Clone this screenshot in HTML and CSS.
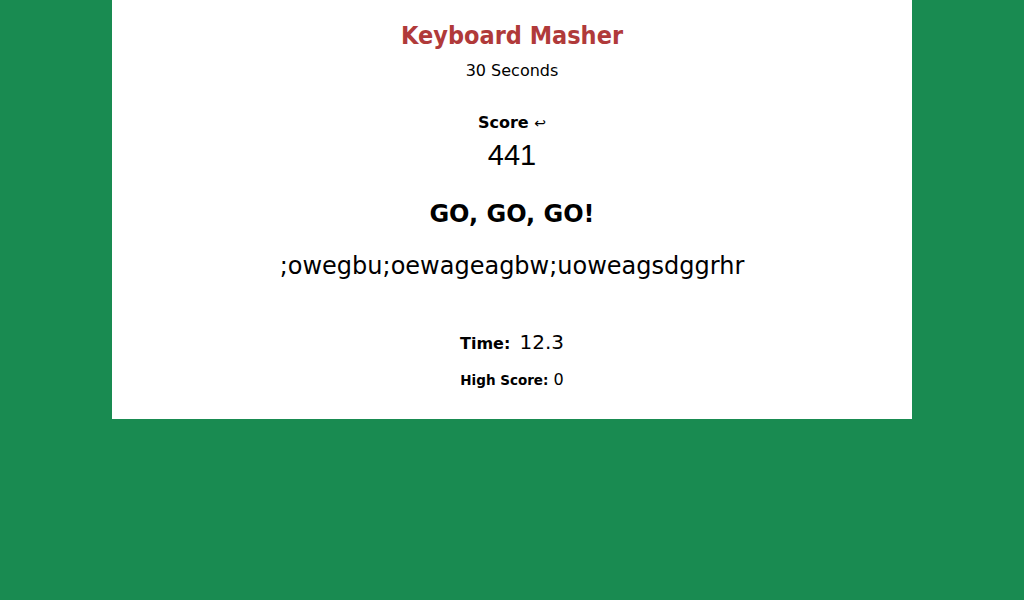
FILE: index.html
```html
<!DOCTYPE html>
<html>
<head>
<meta charset="utf-8">
<link rel="stylesheet" href="styles.css">
</head>
<body>
<main class="game">
  <h1 class="title">Keyboard Masher</h1>
  <p class="subtitle">30 Seconds</p>
  <div class="score-label">Score <span class="arrow">↩</span></div>
  <div class="score">441</div>
  <h2 class="status">GO, GO, GO!</h2>
  <div class="typed">;owegbu;oewageagbw;uoweagsdggrhr</div>
  <div class="time"><span class="time-label">Time:</span> <span class="time-value">12.3</span></div>
  <div class="high"><span class="high-label">High Score:</span> <span class="high-value">0</span></div>
</main>
</body>
</html>
```
FILE: styles.css
```css
html, body {
  margin: 0;
  padding: 0;
  background: #198b51;
  font-family: "DejaVu Sans", Verdana, sans-serif;
  color: #000;
}
.game {
  width: 800px;
  margin: 0 auto;
  background: #fff;
  text-align: center;
  padding: 20px 0 20px;
  box-sizing: border-box;
  height: 419px;
}
.title {
  margin: 0;
  font-family: "DejaVu Sans Condensed", "DejaVu Sans", sans-serif;
  font-size: 25px;
  font-weight: bold;
  color: #b03a3a;
  line-height: 32px;
}
.subtitle {
  margin: 9px 0 0;
  font-size: 16px;
  line-height: 20px;
}
.score-label {
  margin-top: 32px;
  font-size: 16px;
  font-weight: bold;
  line-height: 20px;
}
.arrow { font-weight: normal; font-size: 14px; }
.score {
  margin-top: 4px;
  font-family: "Liberation Sans", Arial, sans-serif;
  font-size: 29px;
  line-height: 36px;
}
.status {
  margin: 27px 0 0;
  font-size: 24px;
  font-weight: bold;
  line-height: 28px;
}
.typed {
  margin-top: 23px;
  font-size: 24px;
  line-height: 30px;
}
.time {
  margin-top: 49px;
  line-height: 24px;
}
.time-label { font-weight: bold; font-size: 16px; }
.time-value { font-size: 20px; margin-left: 4px; }
.high {
  margin-top: 14px;
  line-height: 20px;
}
.high-label { font-weight: bold; font-size: 13.5px; }
.high-value { font-size: 16px; }
```
